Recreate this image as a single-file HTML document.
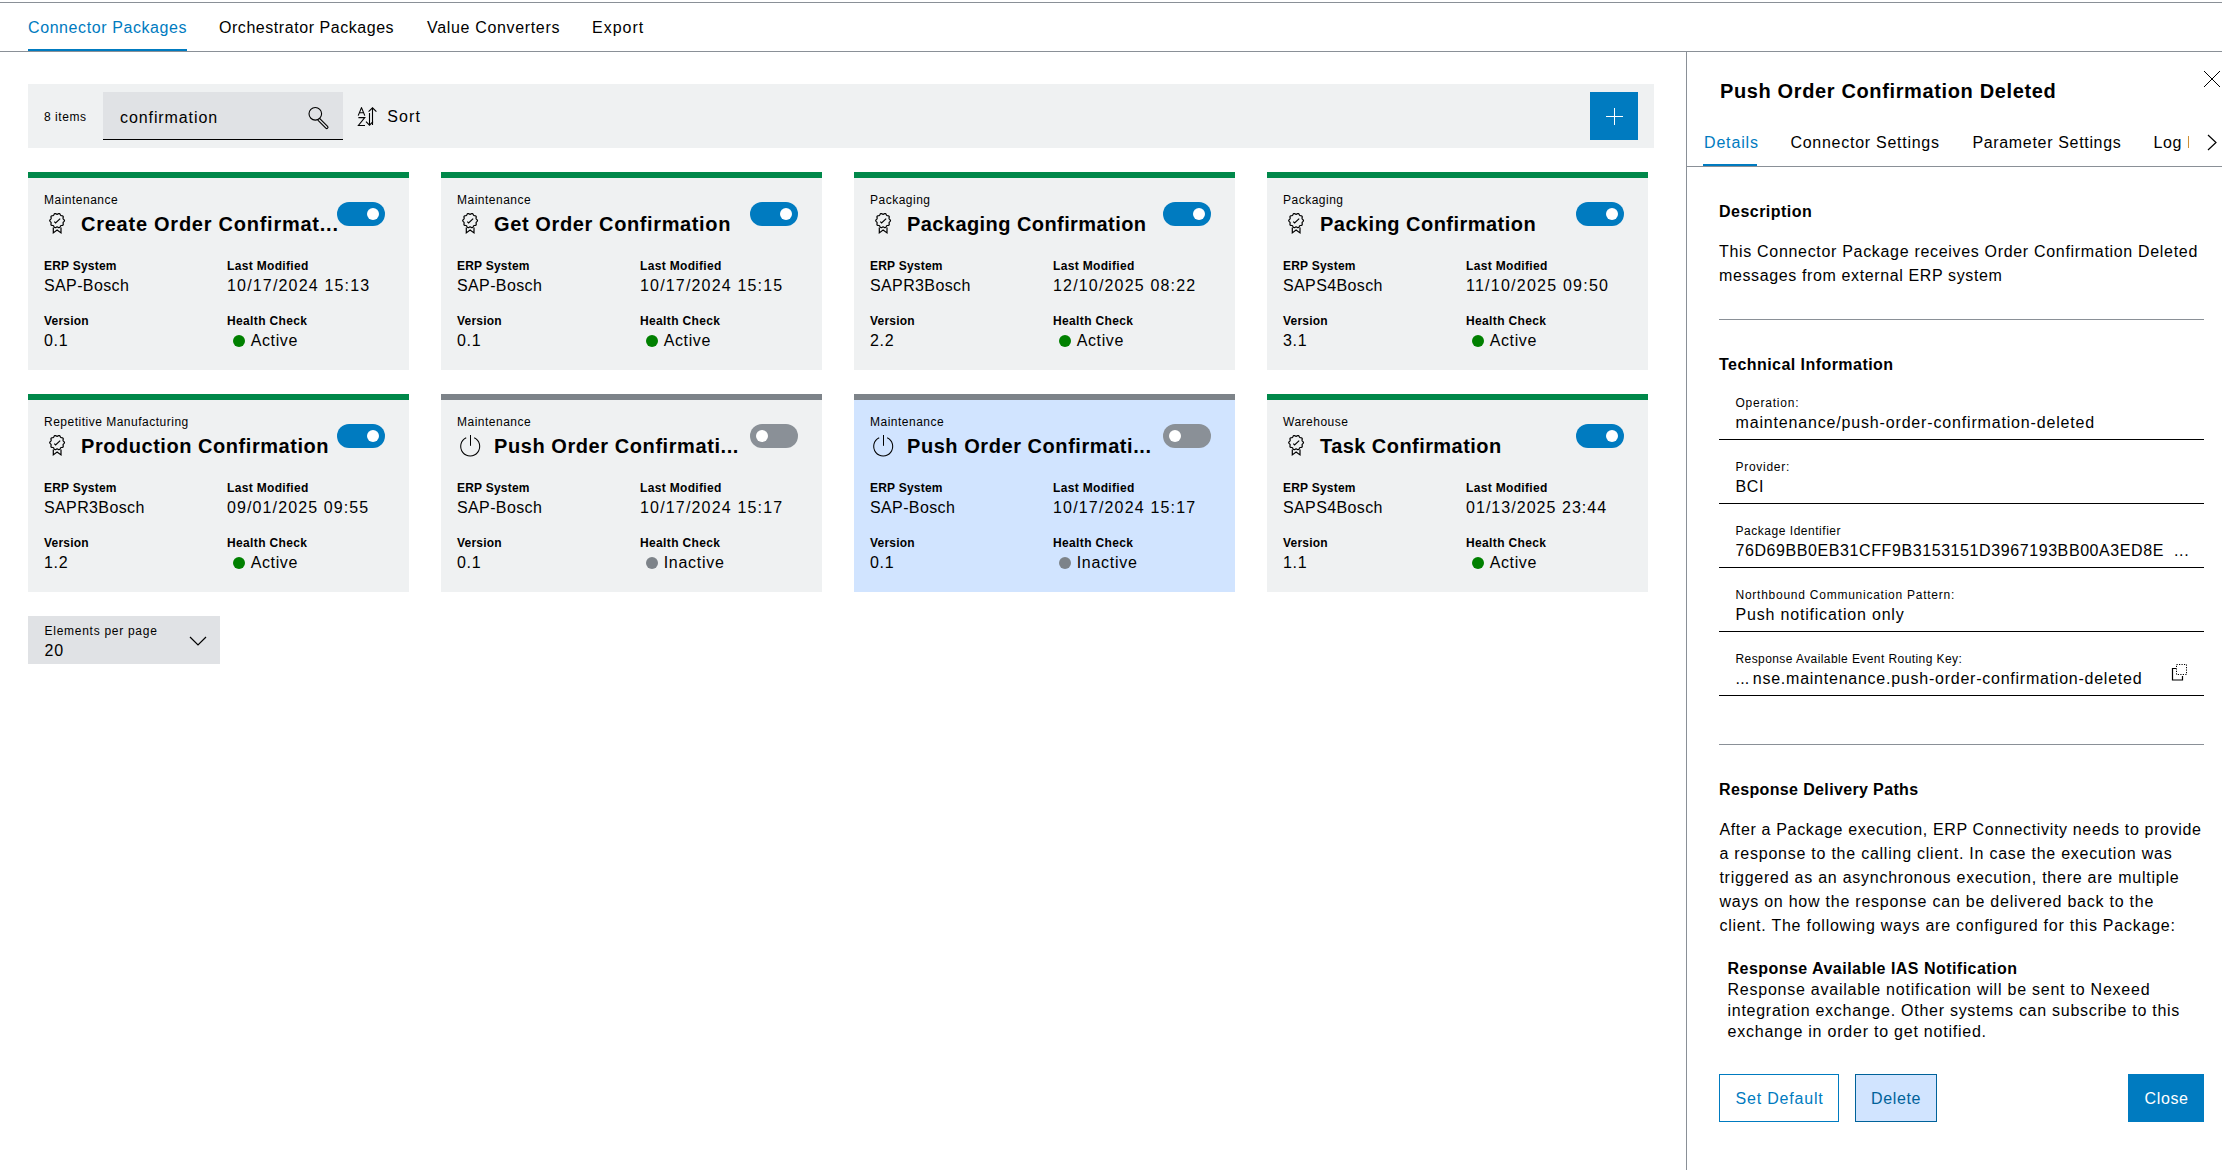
<!DOCTYPE html>
<html><head><meta charset="utf-8"><style>
html,body{margin:0;padding:0;background:#fff;}
body{width:2222px;height:1170px;position:relative;overflow:hidden;font-family:"Liberation Sans",sans-serif;}
.t{position:absolute;white-space:pre;}
.r{position:absolute;}
</style></head><body>
<div class="r" style="left:0px;top:2px;width:2222px;height:1px;background:#8a9097;"></div>
<div class="t" style="left:28.00px;top:16.00px;font-size:16px;line-height:24px;letter-spacing:0.588px;color:#007bc0;">Connector Packages</div>
<div class="t" style="left:219.00px;top:16.00px;font-size:16px;line-height:24px;letter-spacing:0.550px;color:#000;">Orchestrator Packages</div>
<div class="t" style="left:427.00px;top:16.00px;font-size:16px;line-height:24px;letter-spacing:0.667px;color:#000;">Value Converters</div>
<div class="t" style="left:592.00px;top:16.00px;font-size:16px;line-height:24px;letter-spacing:1.000px;color:#000;">Export</div>
<div class="r" style="left:0px;top:51px;width:2222px;height:1px;background:#8a9097;"></div>
<div class="r" style="left:28px;top:49px;width:159px;height:2px;background:#007bc0;"></div>
<div class="r" style="left:28px;top:84px;width:1626px;height:64px;background:#eff1f2;"></div>
<div class="t" style="left:44.00px;top:108.00px;font-size:12px;line-height:18px;letter-spacing:0.550px;color:#000;">8 items</div>
<div class="r" style="left:103px;top:92px;width:240px;height:47px;background:#e0e2e5;"></div>
<div class="r" style="left:103px;top:139px;width:240px;height:1px;background:#000;"></div>
<div class="t" style="left:120.00px;top:106.00px;font-size:16px;line-height:24px;letter-spacing:0.909px;color:#000;">confirmation</div>
<svg class="r" style="left:304px;top:103px" width="28" height="28" viewBox="0 0 28 28"><circle cx="11.3" cy="10.8" r="6.3" fill="none" stroke="#000" stroke-width="1.1"/><path d="M15.6 15.4 L23.6 23.4 a1.25 1.25 0 0 1 -1.8 1.8 L13.8 17.2" fill="none" stroke="#000" stroke-width="1.1"/></svg>
<svg class="r" style="left:355px;top:104px" width="26" height="26" viewBox="0 0 26 26"><path d="M3.2 11.6 L6.5 3.6 L9.8 11.6 M4.3 8.8 H8.7" fill="none" stroke="#000" stroke-width="1.1" stroke-linejoin="round"/><path d="M3.4 13.6 H9.8 L3.4 21.5 H10" fill="none" stroke="#000" stroke-width="1.1"/><path d="M17.5 21 V3.8 M13.6 7.7 L17.5 3.8 L21.4 7.7" fill="none" stroke="#000" stroke-width="1.1"/><path d="M14.5 9 V21.2 M11 17.7 L14.5 21.2 L18 17.7" fill="none" stroke="#000" stroke-width="1.1"/></svg>
<div class="t" style="left:387.20px;top:105.00px;font-size:16px;line-height:24px;letter-spacing:1.167px;color:#000;">Sort</div>
<div class="r" style="left:1590px;top:92px;width:48px;height:48px;background:#007bc0;"></div>
<div class="r" style="left:1606px;top:116px;width:17px;height:1px;background:#fff;"></div>
<div class="r" style="left:1614px;top:108px;width:1px;height:17px;background:#fff;"></div>
<div class="r" style="left:28px;top:172px;width:381px;height:6px;background:#00884a;"></div>
<div class="r" style="left:28px;top:178px;width:381px;height:192px;background:#eff1f2;"></div>
<div class="t" style="left:44.00px;top:191.00px;font-size:12px;line-height:18px;letter-spacing:0.500px;color:#000;">Maintenance</div>
<svg class="r" style="left:48px;top:212px" width="18" height="24" viewBox="0 0 18 24"><path d="M9.10 2.30 L9.61 2.16 L10.17 1.83 L10.79 1.56 L11.39 1.56 L11.87 1.91 L12.21 2.50 L12.48 3.09 L12.80 3.50 L13.30 3.69 L13.94 3.76 L14.60 3.90 L15.09 4.25 L15.27 4.82 L15.20 5.49 L15.07 6.13 L15.09 6.65 L15.38 7.09 L15.87 7.53 L16.32 8.03 L16.50 8.60 L16.32 9.17 L15.87 9.67 L15.38 10.11 L15.09 10.55 L15.07 11.07 L15.20 11.71 L15.27 12.38 L15.09 12.95 L14.60 13.30 L13.94 13.44 L13.30 13.51 L12.80 13.70 L12.48 14.11 L12.21 14.70 L11.87 15.29 L11.39 15.64 L10.79 15.64 L10.17 15.37 L9.61 15.04 L9.10 14.90 L8.59 15.04 L8.03 15.37 L7.41 15.64 L6.81 15.64 L6.33 15.29 L5.99 14.70 L5.72 14.11 L5.40 13.70 L4.90 13.51 L4.26 13.44 L3.60 13.30 L3.11 12.95 L2.93 12.38 L3.00 11.71 L3.13 11.07 L3.11 10.55 L2.82 10.11 L2.33 9.67 L1.88 9.17 L1.70 8.60 L1.88 8.03 L2.33 7.53 L2.82 7.09 L3.11 6.65 L3.13 6.13 L3.00 5.49 L2.93 4.82 L3.11 4.25 L3.60 3.90 L4.26 3.76 L4.90 3.69 L5.40 3.50 L5.72 3.09 L5.99 2.50 L6.33 1.91 L6.81 1.56 L7.41 1.56 L8.03 1.83 L8.59 2.16 L9.10 2.30Z" fill="none" stroke="#000" stroke-width="1.2" stroke-linejoin="round"/><path d="M6.3 9.6 L7.6 10.9 L12.2 6.6" fill="none" stroke="#000" stroke-width="1.2"/><path d="M5.3 15.6 V20.9 L9.1 18.0 L13.0 20.9 V15.6" fill="none" stroke="#000" stroke-width="1.2"/></svg>
<div class="t" style="left:81.00px;top:209.00px;font-size:20px;line-height:30px;letter-spacing:0.750px;color:#000;font-weight:700;">Create Order Confirmat...</div>
<div class="r" style="left:337px;top:202px;width:48px;height:24px;background:#007bc0;border-radius:12px;"></div>
<div class="r" style="left:367px;top:208px;width:12px;height:12px;background:#fff;border-radius:6px;"></div>
<div class="t" style="left:44.00px;top:257.00px;font-size:12px;line-height:18px;letter-spacing:0.222px;color:#000;font-weight:700;">ERP System</div>
<div class="t" style="left:227.00px;top:257.00px;font-size:12px;line-height:18px;letter-spacing:0.333px;color:#000;font-weight:700;">Last Modified</div>
<div class="t" style="left:44.00px;top:274.00px;font-size:16px;line-height:24px;letter-spacing:0.375px;color:#000;">SAP-Bosch</div>
<div class="t" style="left:227.00px;top:274.00px;font-size:16px;line-height:24px;letter-spacing:1.173px;color:#000;">10/17/2024 15:13</div>
<div class="t" style="left:44.00px;top:312.00px;font-size:12px;line-height:18px;letter-spacing:0.200px;color:#000;font-weight:700;">Version</div>
<div class="t" style="left:227.00px;top:312.00px;font-size:12px;line-height:18px;letter-spacing:0.364px;color:#000;font-weight:700;">Health Check</div>
<div class="t" style="left:44.00px;top:329.00px;font-size:16px;line-height:24px;letter-spacing:0.650px;color:#000;">0.1</div>
<div class="r" style="left:232.5px;top:335.4px;width:12px;height:12px;background:#008000;border-radius:6px;"></div>
<div class="t" style="left:250.70px;top:329.00px;font-size:16px;line-height:24px;letter-spacing:0.620px;color:#000;">Active</div>
<div class="r" style="left:441px;top:172px;width:381px;height:6px;background:#00884a;"></div>
<div class="r" style="left:441px;top:178px;width:381px;height:192px;background:#eff1f2;"></div>
<div class="t" style="left:457.00px;top:191.00px;font-size:12px;line-height:18px;letter-spacing:0.500px;color:#000;">Maintenance</div>
<svg class="r" style="left:461px;top:212px" width="18" height="24" viewBox="0 0 18 24"><path d="M9.10 2.30 L9.61 2.16 L10.17 1.83 L10.79 1.56 L11.39 1.56 L11.87 1.91 L12.21 2.50 L12.48 3.09 L12.80 3.50 L13.30 3.69 L13.94 3.76 L14.60 3.90 L15.09 4.25 L15.27 4.82 L15.20 5.49 L15.07 6.13 L15.09 6.65 L15.38 7.09 L15.87 7.53 L16.32 8.03 L16.50 8.60 L16.32 9.17 L15.87 9.67 L15.38 10.11 L15.09 10.55 L15.07 11.07 L15.20 11.71 L15.27 12.38 L15.09 12.95 L14.60 13.30 L13.94 13.44 L13.30 13.51 L12.80 13.70 L12.48 14.11 L12.21 14.70 L11.87 15.29 L11.39 15.64 L10.79 15.64 L10.17 15.37 L9.61 15.04 L9.10 14.90 L8.59 15.04 L8.03 15.37 L7.41 15.64 L6.81 15.64 L6.33 15.29 L5.99 14.70 L5.72 14.11 L5.40 13.70 L4.90 13.51 L4.26 13.44 L3.60 13.30 L3.11 12.95 L2.93 12.38 L3.00 11.71 L3.13 11.07 L3.11 10.55 L2.82 10.11 L2.33 9.67 L1.88 9.17 L1.70 8.60 L1.88 8.03 L2.33 7.53 L2.82 7.09 L3.11 6.65 L3.13 6.13 L3.00 5.49 L2.93 4.82 L3.11 4.25 L3.60 3.90 L4.26 3.76 L4.90 3.69 L5.40 3.50 L5.72 3.09 L5.99 2.50 L6.33 1.91 L6.81 1.56 L7.41 1.56 L8.03 1.83 L8.59 2.16 L9.10 2.30Z" fill="none" stroke="#000" stroke-width="1.2" stroke-linejoin="round"/><path d="M6.3 9.6 L7.6 10.9 L12.2 6.6" fill="none" stroke="#000" stroke-width="1.2"/><path d="M5.3 15.6 V20.9 L9.1 18.0 L13.0 20.9 V15.6" fill="none" stroke="#000" stroke-width="1.2"/></svg>
<div class="t" style="left:494.00px;top:209.00px;font-size:20px;line-height:30px;letter-spacing:0.619px;color:#000;font-weight:700;">Get Order Confirmation</div>
<div class="r" style="left:750px;top:202px;width:48px;height:24px;background:#007bc0;border-radius:12px;"></div>
<div class="r" style="left:780px;top:208px;width:12px;height:12px;background:#fff;border-radius:6px;"></div>
<div class="t" style="left:457.00px;top:257.00px;font-size:12px;line-height:18px;letter-spacing:0.222px;color:#000;font-weight:700;">ERP System</div>
<div class="t" style="left:640.00px;top:257.00px;font-size:12px;line-height:18px;letter-spacing:0.333px;color:#000;font-weight:700;">Last Modified</div>
<div class="t" style="left:457.00px;top:274.00px;font-size:16px;line-height:24px;letter-spacing:0.375px;color:#000;">SAP-Bosch</div>
<div class="t" style="left:640.00px;top:274.00px;font-size:16px;line-height:24px;letter-spacing:1.173px;color:#000;">10/17/2024 15:15</div>
<div class="t" style="left:457.00px;top:312.00px;font-size:12px;line-height:18px;letter-spacing:0.200px;color:#000;font-weight:700;">Version</div>
<div class="t" style="left:640.00px;top:312.00px;font-size:12px;line-height:18px;letter-spacing:0.364px;color:#000;font-weight:700;">Health Check</div>
<div class="t" style="left:457.00px;top:329.00px;font-size:16px;line-height:24px;letter-spacing:0.650px;color:#000;">0.1</div>
<div class="r" style="left:645.5px;top:335.4px;width:12px;height:12px;background:#008000;border-radius:6px;"></div>
<div class="t" style="left:663.70px;top:329.00px;font-size:16px;line-height:24px;letter-spacing:0.620px;color:#000;">Active</div>
<div class="r" style="left:854px;top:172px;width:381px;height:6px;background:#00884a;"></div>
<div class="r" style="left:854px;top:178px;width:381px;height:192px;background:#eff1f2;"></div>
<div class="t" style="left:870.00px;top:191.00px;font-size:12px;line-height:18px;letter-spacing:0.500px;color:#000;">Packaging</div>
<svg class="r" style="left:874px;top:212px" width="18" height="24" viewBox="0 0 18 24"><path d="M9.10 2.30 L9.61 2.16 L10.17 1.83 L10.79 1.56 L11.39 1.56 L11.87 1.91 L12.21 2.50 L12.48 3.09 L12.80 3.50 L13.30 3.69 L13.94 3.76 L14.60 3.90 L15.09 4.25 L15.27 4.82 L15.20 5.49 L15.07 6.13 L15.09 6.65 L15.38 7.09 L15.87 7.53 L16.32 8.03 L16.50 8.60 L16.32 9.17 L15.87 9.67 L15.38 10.11 L15.09 10.55 L15.07 11.07 L15.20 11.71 L15.27 12.38 L15.09 12.95 L14.60 13.30 L13.94 13.44 L13.30 13.51 L12.80 13.70 L12.48 14.11 L12.21 14.70 L11.87 15.29 L11.39 15.64 L10.79 15.64 L10.17 15.37 L9.61 15.04 L9.10 14.90 L8.59 15.04 L8.03 15.37 L7.41 15.64 L6.81 15.64 L6.33 15.29 L5.99 14.70 L5.72 14.11 L5.40 13.70 L4.90 13.51 L4.26 13.44 L3.60 13.30 L3.11 12.95 L2.93 12.38 L3.00 11.71 L3.13 11.07 L3.11 10.55 L2.82 10.11 L2.33 9.67 L1.88 9.17 L1.70 8.60 L1.88 8.03 L2.33 7.53 L2.82 7.09 L3.11 6.65 L3.13 6.13 L3.00 5.49 L2.93 4.82 L3.11 4.25 L3.60 3.90 L4.26 3.76 L4.90 3.69 L5.40 3.50 L5.72 3.09 L5.99 2.50 L6.33 1.91 L6.81 1.56 L7.41 1.56 L8.03 1.83 L8.59 2.16 L9.10 2.30Z" fill="none" stroke="#000" stroke-width="1.2" stroke-linejoin="round"/><path d="M6.3 9.6 L7.6 10.9 L12.2 6.6" fill="none" stroke="#000" stroke-width="1.2"/><path d="M5.3 15.6 V20.9 L9.1 18.0 L13.0 20.9 V15.6" fill="none" stroke="#000" stroke-width="1.2"/></svg>
<div class="t" style="left:907.00px;top:209.00px;font-size:20px;line-height:30px;letter-spacing:0.429px;color:#000;font-weight:700;">Packaging Confirmation</div>
<div class="r" style="left:1163px;top:202px;width:48px;height:24px;background:#007bc0;border-radius:12px;"></div>
<div class="r" style="left:1193px;top:208px;width:12px;height:12px;background:#fff;border-radius:6px;"></div>
<div class="t" style="left:870.00px;top:257.00px;font-size:12px;line-height:18px;letter-spacing:0.222px;color:#000;font-weight:700;">ERP System</div>
<div class="t" style="left:1053.00px;top:257.00px;font-size:12px;line-height:18px;letter-spacing:0.333px;color:#000;font-weight:700;">Last Modified</div>
<div class="t" style="left:870.00px;top:274.00px;font-size:16px;line-height:24px;letter-spacing:0.378px;color:#000;">SAPR3Bosch</div>
<div class="t" style="left:1053.00px;top:274.00px;font-size:16px;line-height:24px;letter-spacing:1.173px;color:#000;">12/10/2025 08:22</div>
<div class="t" style="left:870.00px;top:312.00px;font-size:12px;line-height:18px;letter-spacing:0.200px;color:#000;font-weight:700;">Version</div>
<div class="t" style="left:1053.00px;top:312.00px;font-size:12px;line-height:18px;letter-spacing:0.364px;color:#000;font-weight:700;">Health Check</div>
<div class="t" style="left:870.00px;top:329.00px;font-size:16px;line-height:24px;letter-spacing:0.650px;color:#000;">2.2</div>
<div class="r" style="left:1058.5px;top:335.4px;width:12px;height:12px;background:#008000;border-radius:6px;"></div>
<div class="t" style="left:1076.70px;top:329.00px;font-size:16px;line-height:24px;letter-spacing:0.620px;color:#000;">Active</div>
<div class="r" style="left:1267px;top:172px;width:381px;height:6px;background:#00884a;"></div>
<div class="r" style="left:1267px;top:178px;width:381px;height:192px;background:#eff1f2;"></div>
<div class="t" style="left:1283.00px;top:191.00px;font-size:12px;line-height:18px;letter-spacing:0.500px;color:#000;">Packaging</div>
<svg class="r" style="left:1287px;top:212px" width="18" height="24" viewBox="0 0 18 24"><path d="M9.10 2.30 L9.61 2.16 L10.17 1.83 L10.79 1.56 L11.39 1.56 L11.87 1.91 L12.21 2.50 L12.48 3.09 L12.80 3.50 L13.30 3.69 L13.94 3.76 L14.60 3.90 L15.09 4.25 L15.27 4.82 L15.20 5.49 L15.07 6.13 L15.09 6.65 L15.38 7.09 L15.87 7.53 L16.32 8.03 L16.50 8.60 L16.32 9.17 L15.87 9.67 L15.38 10.11 L15.09 10.55 L15.07 11.07 L15.20 11.71 L15.27 12.38 L15.09 12.95 L14.60 13.30 L13.94 13.44 L13.30 13.51 L12.80 13.70 L12.48 14.11 L12.21 14.70 L11.87 15.29 L11.39 15.64 L10.79 15.64 L10.17 15.37 L9.61 15.04 L9.10 14.90 L8.59 15.04 L8.03 15.37 L7.41 15.64 L6.81 15.64 L6.33 15.29 L5.99 14.70 L5.72 14.11 L5.40 13.70 L4.90 13.51 L4.26 13.44 L3.60 13.30 L3.11 12.95 L2.93 12.38 L3.00 11.71 L3.13 11.07 L3.11 10.55 L2.82 10.11 L2.33 9.67 L1.88 9.17 L1.70 8.60 L1.88 8.03 L2.33 7.53 L2.82 7.09 L3.11 6.65 L3.13 6.13 L3.00 5.49 L2.93 4.82 L3.11 4.25 L3.60 3.90 L4.26 3.76 L4.90 3.69 L5.40 3.50 L5.72 3.09 L5.99 2.50 L6.33 1.91 L6.81 1.56 L7.41 1.56 L8.03 1.83 L8.59 2.16 L9.10 2.30Z" fill="none" stroke="#000" stroke-width="1.2" stroke-linejoin="round"/><path d="M6.3 9.6 L7.6 10.9 L12.2 6.6" fill="none" stroke="#000" stroke-width="1.2"/><path d="M5.3 15.6 V20.9 L9.1 18.0 L13.0 20.9 V15.6" fill="none" stroke="#000" stroke-width="1.2"/></svg>
<div class="t" style="left:1320.00px;top:209.00px;font-size:20px;line-height:30px;letter-spacing:0.474px;color:#000;font-weight:700;">Packing Confirmation</div>
<div class="r" style="left:1576px;top:202px;width:48px;height:24px;background:#007bc0;border-radius:12px;"></div>
<div class="r" style="left:1606px;top:208px;width:12px;height:12px;background:#fff;border-radius:6px;"></div>
<div class="t" style="left:1283.00px;top:257.00px;font-size:12px;line-height:18px;letter-spacing:0.222px;color:#000;font-weight:700;">ERP System</div>
<div class="t" style="left:1466.00px;top:257.00px;font-size:12px;line-height:18px;letter-spacing:0.333px;color:#000;font-weight:700;">Last Modified</div>
<div class="t" style="left:1283.00px;top:274.00px;font-size:16px;line-height:24px;letter-spacing:0.378px;color:#000;">SAPS4Bosch</div>
<div class="t" style="left:1466.00px;top:274.00px;font-size:16px;line-height:24px;letter-spacing:1.240px;color:#000;">11/10/2025 09:50</div>
<div class="t" style="left:1283.00px;top:312.00px;font-size:12px;line-height:18px;letter-spacing:0.200px;color:#000;font-weight:700;">Version</div>
<div class="t" style="left:1466.00px;top:312.00px;font-size:12px;line-height:18px;letter-spacing:0.364px;color:#000;font-weight:700;">Health Check</div>
<div class="t" style="left:1283.00px;top:329.00px;font-size:16px;line-height:24px;letter-spacing:0.650px;color:#000;">3.1</div>
<div class="r" style="left:1471.5px;top:335.4px;width:12px;height:12px;background:#008000;border-radius:6px;"></div>
<div class="t" style="left:1489.70px;top:329.00px;font-size:16px;line-height:24px;letter-spacing:0.620px;color:#000;">Active</div>
<div class="r" style="left:28px;top:394px;width:381px;height:6px;background:#00884a;"></div>
<div class="r" style="left:28px;top:400px;width:381px;height:192px;background:#eff1f2;"></div>
<div class="t" style="left:44.00px;top:413.00px;font-size:12px;line-height:18px;letter-spacing:0.500px;color:#000;">Repetitive Manufacturing</div>
<svg class="r" style="left:48px;top:434px" width="18" height="24" viewBox="0 0 18 24"><path d="M9.10 2.30 L9.61 2.16 L10.17 1.83 L10.79 1.56 L11.39 1.56 L11.87 1.91 L12.21 2.50 L12.48 3.09 L12.80 3.50 L13.30 3.69 L13.94 3.76 L14.60 3.90 L15.09 4.25 L15.27 4.82 L15.20 5.49 L15.07 6.13 L15.09 6.65 L15.38 7.09 L15.87 7.53 L16.32 8.03 L16.50 8.60 L16.32 9.17 L15.87 9.67 L15.38 10.11 L15.09 10.55 L15.07 11.07 L15.20 11.71 L15.27 12.38 L15.09 12.95 L14.60 13.30 L13.94 13.44 L13.30 13.51 L12.80 13.70 L12.48 14.11 L12.21 14.70 L11.87 15.29 L11.39 15.64 L10.79 15.64 L10.17 15.37 L9.61 15.04 L9.10 14.90 L8.59 15.04 L8.03 15.37 L7.41 15.64 L6.81 15.64 L6.33 15.29 L5.99 14.70 L5.72 14.11 L5.40 13.70 L4.90 13.51 L4.26 13.44 L3.60 13.30 L3.11 12.95 L2.93 12.38 L3.00 11.71 L3.13 11.07 L3.11 10.55 L2.82 10.11 L2.33 9.67 L1.88 9.17 L1.70 8.60 L1.88 8.03 L2.33 7.53 L2.82 7.09 L3.11 6.65 L3.13 6.13 L3.00 5.49 L2.93 4.82 L3.11 4.25 L3.60 3.90 L4.26 3.76 L4.90 3.69 L5.40 3.50 L5.72 3.09 L5.99 2.50 L6.33 1.91 L6.81 1.56 L7.41 1.56 L8.03 1.83 L8.59 2.16 L9.10 2.30Z" fill="none" stroke="#000" stroke-width="1.2" stroke-linejoin="round"/><path d="M6.3 9.6 L7.6 10.9 L12.2 6.6" fill="none" stroke="#000" stroke-width="1.2"/><path d="M5.3 15.6 V20.9 L9.1 18.0 L13.0 20.9 V15.6" fill="none" stroke="#000" stroke-width="1.2"/></svg>
<div class="t" style="left:81.00px;top:431.00px;font-size:20px;line-height:30px;letter-spacing:0.545px;color:#000;font-weight:700;">Production Confirmation</div>
<div class="r" style="left:337px;top:424px;width:48px;height:24px;background:#007bc0;border-radius:12px;"></div>
<div class="r" style="left:367px;top:430px;width:12px;height:12px;background:#fff;border-radius:6px;"></div>
<div class="t" style="left:44.00px;top:479.00px;font-size:12px;line-height:18px;letter-spacing:0.222px;color:#000;font-weight:700;">ERP System</div>
<div class="t" style="left:227.00px;top:479.00px;font-size:12px;line-height:18px;letter-spacing:0.333px;color:#000;font-weight:700;">Last Modified</div>
<div class="t" style="left:44.00px;top:496.00px;font-size:16px;line-height:24px;letter-spacing:0.378px;color:#000;">SAPR3Bosch</div>
<div class="t" style="left:227.00px;top:496.00px;font-size:16px;line-height:24px;letter-spacing:1.107px;color:#000;">09/01/2025 09:55</div>
<div class="t" style="left:44.00px;top:534.00px;font-size:12px;line-height:18px;letter-spacing:0.200px;color:#000;font-weight:700;">Version</div>
<div class="t" style="left:227.00px;top:534.00px;font-size:12px;line-height:18px;letter-spacing:0.364px;color:#000;font-weight:700;">Health Check</div>
<div class="t" style="left:44.00px;top:551.00px;font-size:16px;line-height:24px;letter-spacing:0.650px;color:#000;">1.2</div>
<div class="r" style="left:232.5px;top:557.4px;width:12px;height:12px;background:#008000;border-radius:6px;"></div>
<div class="t" style="left:250.70px;top:551.00px;font-size:16px;line-height:24px;letter-spacing:0.620px;color:#000;">Active</div>
<div class="r" style="left:441px;top:394px;width:381px;height:6px;background:#7d8389;"></div>
<div class="r" style="left:441px;top:400px;width:381px;height:192px;background:#eff1f2;"></div>
<div class="t" style="left:457.00px;top:413.00px;font-size:12px;line-height:18px;letter-spacing:0.500px;color:#000;">Maintenance</div>
<svg class="r" style="left:458px;top:435px" width="24" height="24" viewBox="0 0 24 24"><path d="M8.2 2.8 A9.5 9.5 0 1 0 16.2 2.8" fill="none" stroke="#000" stroke-width="1.05"/><path d="M12.5 0 V10.8" fill="none" stroke="#000" stroke-width="1.05"/></svg>
<div class="t" style="left:494.00px;top:431.00px;font-size:20px;line-height:30px;letter-spacing:0.574px;color:#000;font-weight:700;">Push Order Confirmati...</div>
<div class="r" style="left:750px;top:424px;width:48px;height:24px;background:#8a9097;border-radius:12px;"></div>
<div class="r" style="left:756px;top:430px;width:12px;height:12px;background:#fff;border-radius:6px;"></div>
<div class="t" style="left:457.00px;top:479.00px;font-size:12px;line-height:18px;letter-spacing:0.222px;color:#000;font-weight:700;">ERP System</div>
<div class="t" style="left:640.00px;top:479.00px;font-size:12px;line-height:18px;letter-spacing:0.333px;color:#000;font-weight:700;">Last Modified</div>
<div class="t" style="left:457.00px;top:496.00px;font-size:16px;line-height:24px;letter-spacing:0.375px;color:#000;">SAP-Bosch</div>
<div class="t" style="left:640.00px;top:496.00px;font-size:16px;line-height:24px;letter-spacing:1.173px;color:#000;">10/17/2024 15:17</div>
<div class="t" style="left:457.00px;top:534.00px;font-size:12px;line-height:18px;letter-spacing:0.200px;color:#000;font-weight:700;">Version</div>
<div class="t" style="left:640.00px;top:534.00px;font-size:12px;line-height:18px;letter-spacing:0.364px;color:#000;font-weight:700;">Health Check</div>
<div class="t" style="left:457.00px;top:551.00px;font-size:16px;line-height:24px;letter-spacing:0.650px;color:#000;">0.1</div>
<div class="r" style="left:645.5px;top:557.4px;width:12px;height:12px;background:#7d8389;border-radius:6px;"></div>
<div class="t" style="left:663.70px;top:551.00px;font-size:16px;line-height:24px;letter-spacing:0.714px;color:#000;">Inactive</div>
<div class="r" style="left:854px;top:394px;width:381px;height:6px;background:#7d8389;"></div>
<div class="r" style="left:854px;top:400px;width:381px;height:192px;background:#d1e4ff;"></div>
<div class="t" style="left:870.00px;top:413.00px;font-size:12px;line-height:18px;letter-spacing:0.500px;color:#000;">Maintenance</div>
<svg class="r" style="left:871px;top:435px" width="24" height="24" viewBox="0 0 24 24"><path d="M8.2 2.8 A9.5 9.5 0 1 0 16.2 2.8" fill="none" stroke="#000" stroke-width="1.05"/><path d="M12.5 0 V10.8" fill="none" stroke="#000" stroke-width="1.05"/></svg>
<div class="t" style="left:907.00px;top:431.00px;font-size:20px;line-height:30px;letter-spacing:0.557px;color:#000;font-weight:700;">Push Order Confirmati...</div>
<div class="r" style="left:1163px;top:424px;width:48px;height:24px;background:#8a9097;border-radius:12px;"></div>
<div class="r" style="left:1169px;top:430px;width:12px;height:12px;background:#fff;border-radius:6px;"></div>
<div class="t" style="left:870.00px;top:479.00px;font-size:12px;line-height:18px;letter-spacing:0.222px;color:#000;font-weight:700;">ERP System</div>
<div class="t" style="left:1053.00px;top:479.00px;font-size:12px;line-height:18px;letter-spacing:0.333px;color:#000;font-weight:700;">Last Modified</div>
<div class="t" style="left:870.00px;top:496.00px;font-size:16px;line-height:24px;letter-spacing:0.375px;color:#000;">SAP-Bosch</div>
<div class="t" style="left:1053.00px;top:496.00px;font-size:16px;line-height:24px;letter-spacing:1.173px;color:#000;">10/17/2024 15:17</div>
<div class="t" style="left:870.00px;top:534.00px;font-size:12px;line-height:18px;letter-spacing:0.200px;color:#000;font-weight:700;">Version</div>
<div class="t" style="left:1053.00px;top:534.00px;font-size:12px;line-height:18px;letter-spacing:0.364px;color:#000;font-weight:700;">Health Check</div>
<div class="t" style="left:870.00px;top:551.00px;font-size:16px;line-height:24px;letter-spacing:0.650px;color:#000;">0.1</div>
<div class="r" style="left:1058.5px;top:557.4px;width:12px;height:12px;background:#7d8389;border-radius:6px;"></div>
<div class="t" style="left:1076.70px;top:551.00px;font-size:16px;line-height:24px;letter-spacing:0.714px;color:#000;">Inactive</div>
<div class="r" style="left:1267px;top:394px;width:381px;height:6px;background:#00884a;"></div>
<div class="r" style="left:1267px;top:400px;width:381px;height:192px;background:#eff1f2;"></div>
<div class="t" style="left:1283.00px;top:413.00px;font-size:12px;line-height:18px;letter-spacing:0.500px;color:#000;">Warehouse</div>
<svg class="r" style="left:1287px;top:434px" width="18" height="24" viewBox="0 0 18 24"><path d="M9.10 2.30 L9.61 2.16 L10.17 1.83 L10.79 1.56 L11.39 1.56 L11.87 1.91 L12.21 2.50 L12.48 3.09 L12.80 3.50 L13.30 3.69 L13.94 3.76 L14.60 3.90 L15.09 4.25 L15.27 4.82 L15.20 5.49 L15.07 6.13 L15.09 6.65 L15.38 7.09 L15.87 7.53 L16.32 8.03 L16.50 8.60 L16.32 9.17 L15.87 9.67 L15.38 10.11 L15.09 10.55 L15.07 11.07 L15.20 11.71 L15.27 12.38 L15.09 12.95 L14.60 13.30 L13.94 13.44 L13.30 13.51 L12.80 13.70 L12.48 14.11 L12.21 14.70 L11.87 15.29 L11.39 15.64 L10.79 15.64 L10.17 15.37 L9.61 15.04 L9.10 14.90 L8.59 15.04 L8.03 15.37 L7.41 15.64 L6.81 15.64 L6.33 15.29 L5.99 14.70 L5.72 14.11 L5.40 13.70 L4.90 13.51 L4.26 13.44 L3.60 13.30 L3.11 12.95 L2.93 12.38 L3.00 11.71 L3.13 11.07 L3.11 10.55 L2.82 10.11 L2.33 9.67 L1.88 9.17 L1.70 8.60 L1.88 8.03 L2.33 7.53 L2.82 7.09 L3.11 6.65 L3.13 6.13 L3.00 5.49 L2.93 4.82 L3.11 4.25 L3.60 3.90 L4.26 3.76 L4.90 3.69 L5.40 3.50 L5.72 3.09 L5.99 2.50 L6.33 1.91 L6.81 1.56 L7.41 1.56 L8.03 1.83 L8.59 2.16 L9.10 2.30Z" fill="none" stroke="#000" stroke-width="1.2" stroke-linejoin="round"/><path d="M6.3 9.6 L7.6 10.9 L12.2 6.6" fill="none" stroke="#000" stroke-width="1.2"/><path d="M5.3 15.6 V20.9 L9.1 18.0 L13.0 20.9 V15.6" fill="none" stroke="#000" stroke-width="1.2"/></svg>
<div class="t" style="left:1320.00px;top:431.00px;font-size:20px;line-height:30px;letter-spacing:0.438px;color:#000;font-weight:700;">Task Confirmation</div>
<div class="r" style="left:1576px;top:424px;width:48px;height:24px;background:#007bc0;border-radius:12px;"></div>
<div class="r" style="left:1606px;top:430px;width:12px;height:12px;background:#fff;border-radius:6px;"></div>
<div class="t" style="left:1283.00px;top:479.00px;font-size:12px;line-height:18px;letter-spacing:0.222px;color:#000;font-weight:700;">ERP System</div>
<div class="t" style="left:1466.00px;top:479.00px;font-size:12px;line-height:18px;letter-spacing:0.333px;color:#000;font-weight:700;">Last Modified</div>
<div class="t" style="left:1283.00px;top:496.00px;font-size:16px;line-height:24px;letter-spacing:0.378px;color:#000;">SAPS4Bosch</div>
<div class="t" style="left:1466.00px;top:496.00px;font-size:16px;line-height:24px;letter-spacing:1.040px;color:#000;">01/13/2025 23:44</div>
<div class="t" style="left:1283.00px;top:534.00px;font-size:12px;line-height:18px;letter-spacing:0.200px;color:#000;font-weight:700;">Version</div>
<div class="t" style="left:1466.00px;top:534.00px;font-size:12px;line-height:18px;letter-spacing:0.364px;color:#000;font-weight:700;">Health Check</div>
<div class="t" style="left:1283.00px;top:551.00px;font-size:16px;line-height:24px;letter-spacing:0.650px;color:#000;">1.1</div>
<div class="r" style="left:1471.5px;top:557.4px;width:12px;height:12px;background:#008000;border-radius:6px;"></div>
<div class="t" style="left:1489.70px;top:551.00px;font-size:16px;line-height:24px;letter-spacing:0.620px;color:#000;">Active</div>
<div class="r" style="left:28px;top:616px;width:192px;height:48px;background:#e0e2e5;"></div>
<div class="t" style="left:44.60px;top:622.00px;font-size:12px;line-height:18px;letter-spacing:0.719px;color:#000;">Elements per page</div>
<div class="t" style="left:44.60px;top:639.00px;font-size:16px;line-height:24px;letter-spacing:0.650px;color:#000;">20</div>
<svg class="r" style="left:188px;top:630px" width="20" height="20" viewBox="0 0 20 20"><path d="M2 7 L10 15 L18 7" fill="none" stroke="#000" stroke-width="1.2"/></svg>
<div class="r" style="left:1686px;top:52px;width:1px;height:1118px;background:#8a9097;"></div>
<div class="t" style="left:1720.00px;top:76.00px;font-size:20px;line-height:30px;letter-spacing:0.633px;color:#000;font-weight:700;">Push Order Confirmation Deleted</div>
<svg class="r" style="left:2202px;top:69px" width="20" height="20" viewBox="0 0 20 20"><path d="M2 2 L18 18 M18 2 L2 18" fill="none" stroke="#000" stroke-width="1"/></svg>
<div class="t" style="left:1704.00px;top:131.00px;font-size:16px;line-height:24px;letter-spacing:0.833px;color:#007bc0;">Details</div>
<div class="t" style="left:1790.40px;top:131.00px;font-size:16px;line-height:24px;letter-spacing:0.735px;color:#000;">Connector Settings</div>
<div class="t" style="left:1972.40px;top:131.00px;font-size:16px;line-height:24px;letter-spacing:0.671px;color:#000;">Parameter Settings</div>
<div class="r" style="left:2153px;top:120px;width:36px;height:40px;overflow:hidden">
<div class="t" style="left:0.40px;top:11.00px;font-size:16px;line-height:24px;letter-spacing:0.650px;color:#000;">Log Level</div>
</div>
<svg class="r" style="left:2204px;top:132px" width="16" height="20" viewBox="0 0 16 20"><path d="M4 3 L12 10.5 L4 18" fill="none" stroke="#000" stroke-width="1.2"/></svg>
<div class="r" style="left:1687px;top:166px;width:535px;height:1px;background:#8a9097;"></div>
<div class="r" style="left:1703px;top:164px;width:54px;height:2px;background:#007bc0;"></div>
<div class="t" style="left:1719.00px;top:200.00px;font-size:16px;line-height:24px;letter-spacing:0.470px;color:#000;font-weight:700;">Description</div>
<div class="t" style="left:1719.00px;top:240.00px;font-size:16px;line-height:24px;letter-spacing:0.684px;color:#000;">This Connector Package receives Order Confirmation Deleted</div>
<div class="t" style="left:1719.00px;top:264.00px;font-size:16px;line-height:24px;letter-spacing:0.625px;color:#000;">messages from external ERP system</div>
<div class="r" style="left:1719px;top:319px;width:485px;height:1px;background:#8a9097;"></div>
<div class="t" style="left:1719.00px;top:353.00px;font-size:16px;line-height:24px;letter-spacing:0.450px;color:#000;font-weight:700;">Technical Information</div>
<div class="t" style="left:1735.50px;top:394.00px;font-size:12px;line-height:18px;letter-spacing:0.778px;color:#000;">Operation:</div>
<div class="t" style="left:1735.50px;top:411.00px;font-size:16px;line-height:24px;letter-spacing:0.833px;color:#000;">maintenance/push-order-confirmation-deleted</div>
<div class="r" style="left:1719px;top:439px;width:485px;height:1px;background:#000;"></div>
<div class="t" style="left:1735.50px;top:458.00px;font-size:12px;line-height:18px;letter-spacing:0.713px;color:#000;">Provider:</div>
<div class="t" style="left:1735.50px;top:475.00px;font-size:16px;line-height:24px;letter-spacing:0.650px;color:#000;">BCI</div>
<div class="r" style="left:1719px;top:503px;width:485px;height:1px;background:#000;"></div>
<div class="t" style="left:1735.50px;top:522.00px;font-size:12px;line-height:18px;letter-spacing:0.529px;color:#000;">Package Identifier</div>
<div class="t" style="left:1735.50px;top:539.00px;font-size:16px;line-height:24px;letter-spacing:0.587px;color:#000;">76D69BB0EB31CFF9B3153151D3967193BB00A3ED8E  ...</div>
<div class="r" style="left:1719px;top:567px;width:485px;height:1px;background:#000;"></div>
<div class="t" style="left:1735.50px;top:586.00px;font-size:12px;line-height:18px;letter-spacing:0.750px;color:#000;">Northbound Communication Pattern:</div>
<div class="t" style="left:1735.50px;top:603.00px;font-size:16px;line-height:24px;letter-spacing:0.810px;color:#000;">Push notification only</div>
<div class="r" style="left:1719px;top:631px;width:485px;height:1px;background:#000;"></div>
<div class="t" style="left:1735.50px;top:650.00px;font-size:12px;line-height:18px;letter-spacing:0.417px;color:#000;">Response Available Event Routing Key:</div>
<div class="t" style="left:1735.50px;top:667.00px;font-size:16px;line-height:24px;letter-spacing:0.200px;color:#000;">...</div>
<div class="t" style="left:1752.80px;top:667.00px;font-size:16px;line-height:24px;letter-spacing:0.757px;color:#000;">nse.maintenance.push-order-confirmation-deleted</div>
<div class="r" style="left:1719px;top:695px;width:485px;height:1px;background:#000;"></div>
<svg class="r" style="left:2170px;top:662px" width="20" height="20" viewBox="0 0 20 20"><path d="M6 6.5 H2.5 V18 H12.5 V14" fill="none" stroke="#000" stroke-width="1.2"/><rect x="6.5" y="2.5" width="10" height="10" fill="none" stroke="#000" stroke-width="1" stroke-dasharray="1.2 1.3"/></svg>
<div class="r" style="left:1719px;top:744px;width:485px;height:1px;background:#8a9097;"></div>
<div class="t" style="left:1719.00px;top:778.00px;font-size:16px;line-height:24px;letter-spacing:0.360px;color:#000;font-weight:700;">Response Delivery Paths</div>
<div class="t" style="left:1719.40px;top:818.00px;font-size:16px;line-height:24px;letter-spacing:0.661px;color:#000;">After a Package execution, ERP Connectivity needs to provide</div>
<div class="t" style="left:1719.40px;top:842.00px;font-size:16px;line-height:24px;letter-spacing:0.759px;color:#000;">a response to the calling client. In case the execution was</div>
<div class="t" style="left:1719.40px;top:866.00px;font-size:16px;line-height:24px;letter-spacing:0.754px;color:#000;">triggered as an asynchronous execution, there are multiple</div>
<div class="t" style="left:1719.40px;top:890.00px;font-size:16px;line-height:24px;letter-spacing:0.769px;color:#000;">ways on how the response can be delivered back to the</div>
<div class="t" style="left:1719.40px;top:914.00px;font-size:16px;line-height:24px;letter-spacing:0.759px;color:#000;">client. The following ways are configured for this Package:</div>
<div class="t" style="left:1727.50px;top:957.00px;font-size:16px;line-height:24px;letter-spacing:0.471px;color:#000;font-weight:700;">Response Available IAS Notification</div>
<div class="t" style="left:1727.50px;top:978.00px;font-size:16px;line-height:24px;letter-spacing:0.764px;color:#000;">Response available notification will be sent to Nexeed</div>
<div class="t" style="left:1727.50px;top:999.00px;font-size:16px;line-height:24px;letter-spacing:0.732px;color:#000;">integration exchange. Other systems can subscribe to this</div>
<div class="t" style="left:1727.50px;top:1020.00px;font-size:16px;line-height:24px;letter-spacing:0.773px;color:#000;">exchange in order to get notified.</div>
<div class="r" style="left:1719px;top:1074px;width:120px;height:48px;background:#fff;box-sizing:border-box;border:1px solid #007bc0;"></div>
<div class="t" style="left:1735.60px;top:1087.00px;font-size:16px;line-height:24px;letter-spacing:0.800px;color:#007bc0;">Set Default</div>
<div class="r" style="left:1855px;top:1074px;width:82px;height:48px;background:#d1e4ff;box-sizing:border-box;border:1px solid #00629a;"></div>
<div class="t" style="left:1871.00px;top:1087.00px;font-size:16px;line-height:24px;letter-spacing:0.650px;color:#00629a;">Delete</div>
<div class="r" style="left:2128px;top:1074px;width:76px;height:48px;background:#007bc0;"></div>
<div class="t" style="left:2144.50px;top:1087.00px;font-size:16px;line-height:24px;letter-spacing:0.650px;color:#fff;">Close</div>
</body></html>
